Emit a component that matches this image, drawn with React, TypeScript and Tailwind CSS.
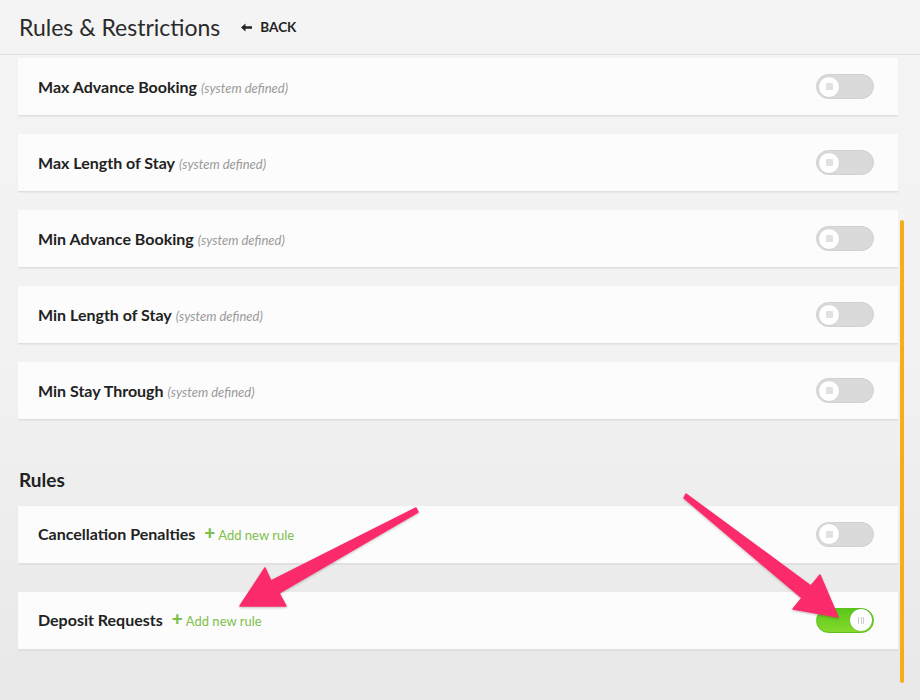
import React from "react";

const restrictions = [
  "Max Advance Booking",
  "Max Length of Stay",
  "Min Advance Booking",
  "Min Length of Stay",
  "Min Stay Through",
];

function Toggle({ on }: { on?: boolean }) {
  if (on) {
    return (
      <div className="flex h-[25px] w-[58px] items-center justify-end rounded-full border border-[#5cbf1c] bg-gradient-to-b from-[#58c818] to-[#84d92c] px-[1px]">
        <div className="flex h-[22px] w-[22px] items-center justify-center gap-[1.5px] rounded-full bg-white shadow-[0_0_1px_rgba(0,0,0,0.3)]">
          <span className="h-[7px] w-px bg-[#ccc]" />
          <span className="h-[7px] w-px bg-[#ccc]" />
          <span className="h-[7px] w-px bg-[#ccc]" />
        </div>
      </div>
    );
  }
  return (
    <div className="flex h-[25px] w-[58px] items-center rounded-full border border-[#d0d0d0] bg-[#dadada] px-[1px]">
      <div className="flex h-[22px] w-[22px] items-center justify-center rounded-full border border-[#d4d4d4] bg-white">
        <span className="h-[7px] w-[7px] bg-[#e2e2e2]" />
      </div>
    </div>
  );
}

function Card({ children, on }: { children: React.ReactNode; on?: boolean }) {
  return (
    <div className="flex h-[57px] items-center justify-between bg-[#fcfcfc] pl-5 pr-[24px] shadow-[0_1px_0_#e0e0e0,0_2px_1px_rgba(0,0,0,0.04)]">
      <div className="flex items-baseline">{children}</div>
      <Toggle on={on} />
    </div>
  );
}

function AddRule() {
  return (
    <span className="ml-[9px] flex items-baseline text-[13px] text-[#7cc04b]">
      <span className="mr-[3px] text-[19px] font-black leading-none">+</span>
      Add new rule
    </span>
  );
}

export default function App() {
  return (
    <div
      className="relative h-[700px] w-[920px] overflow-hidden bg-gradient-to-b from-[#f4f4f4] via-[#f2f2f2] to-[#e8e8e8] text-[#222]"
      style={{ fontFamily: "Lato, 'Open Sans', sans-serif" }}
    >
      <header className="flex h-[55px] items-center border-b border-[#dcdcdc] pl-[19px]">
        <h1 className="text-[23px] font-normal text-[#2a2a2a]">Rules &amp; Restrictions</h1>
        <button className="ml-[21px] flex items-center gap-[8px] text-[13.5px] font-bold text-[#222]">
          <svg width="11" height="9" viewBox="0 0 11 9" className="mt-[1px]">
            <path d="M0 4.5 L4.5 0.5 L4.5 3.2 L11 3.2 L11 5.8 L4.5 5.8 L4.5 8.5 Z" fill="#222" />
          </svg>
          BACK
        </button>
      </header>

      <div className="w-[898px] pl-[18px] pt-[3px]">
        <div className="flex flex-col gap-[19px]">
          {restrictions.map((name) => (
            <Card key={name}>
              <span className="text-[16px] font-bold text-[#222]">{name}</span>
              <span className="ml-1 text-[13px] italic text-[#9a9a9a]">(system defined)</span>
            </Card>
          ))}
        </div>

        <h2 className="mt-[47px] mb-[11px] pl-[1px] text-[19px] font-bold text-[#222]">Rules</h2>

        <div className="flex flex-col gap-[29px]">
          <Card>
            <span className="text-[16px] font-bold text-[#222]">Cancellation Penalties</span>
            <AddRule />
          </Card>
          <Card on>
            <span className="text-[16px] font-bold text-[#222]">Deposit Requests</span>
            <AddRule />
          </Card>
        </div>
      </div>

      {/* scrollbar thumb */}
      <div className="absolute left-[900px] top-[220px] h-[463px] w-[4px] rounded-full bg-[#f6ad1c]" />

      {/* annotation arrows */}
      <svg className="pointer-events-none absolute inset-0" width="920" height="700">
        <defs>
          <filter id="sh" x="-10%" y="-10%" width="120%" height="120%">
            <feDropShadow dx="0" dy="1" stdDeviation="1" floodColor="#000" floodOpacity="0.25" />
          </filter>
        </defs>
        <polygon
          points="418,512 279,593 286,606 240,606 265,568 271,581 416,508"
          fill="#fb2a6b"
          strokeLinejoin="round"
          stroke="#fb2a6b"
          strokeWidth="1.5"
          filter="url(#sh)"
        />
        <polygon
          points="684,498 802,598 793,609 838,617 820,575 811,586 686,494"
          fill="#fb2a6b"
          strokeLinejoin="round"
          stroke="#fb2a6b"
          strokeWidth="1.5"
          filter="url(#sh)"
        />
      </svg>
    </div>
  );
}
